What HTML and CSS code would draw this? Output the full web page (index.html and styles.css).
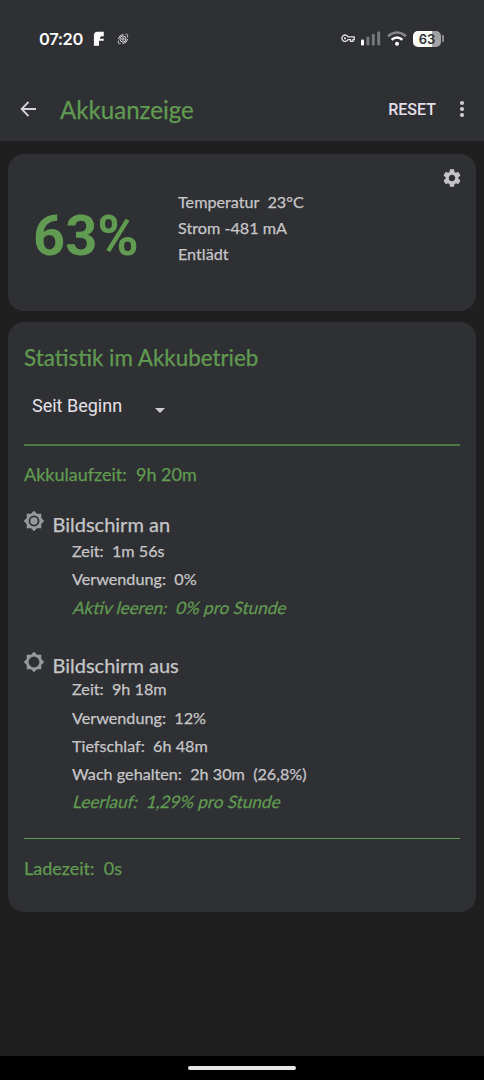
FILE: index.html
```html
<!DOCTYPE html>
<html lang="de">
<head>
<meta charset="utf-8">
<meta name="viewport" content="width=device-width">
<title>Akkuanzeige</title>
<link rel="stylesheet" href="styles.css">
</head>
<body>
<div class="screen">
  <header class="header">
    <div class="status">
      <span class="clock">07:20</span>
      <svg class="ic-f" width="12" height="16" viewBox="0 0 12 16"><path fill="#fff" d="M4.5.8h6.3v4.4H8.4L7 6.6v1.2h3.7v2H6v5H.9V4.4Q.9.8 4.5.8Z"/></svg>
      <svg class="ic-orbit" width="12" height="12" viewBox="0 0 12 12" fill="none" stroke="#ddd"><circle cx="6" cy="6" r="3.1" stroke-width="1"/><circle cx="6" cy="6" r="1.2" stroke-width="1"/><path stroke-width=".9" d="M1.4 7.6V9.6Q1.4 10.7 2.5 10.7H3.6M10.6 4.4V2.4Q10.6 1.3 9.5 1.3H8.4M1.2 6Q1.8 2.4 6.4 1.2M10.8 6Q10.2 9.6 5.6 10.8"/></svg>
      <span class="grow"></span>
      <svg class="ic-key" width="14" height="9" viewBox="0 0 14 9" fill="none" stroke="#e4e4e4" stroke-width="1.3"><path d="M7 2.8H13.2V5.6H12V7.4H9.5V5.6H7A3.2 3.2 0 1 1 7 2.8Z"/><circle cx="4" cy="4.3" r="1.1" fill="#e4e4e4" stroke="none"/></svg>
      <svg class="ic-signal" width="20" height="15" viewBox="0 0 20 15"><rect x="0" y="8.5" width="3" height="6" rx="1.2" fill="#fff"/><g fill="#77787b"><rect x="5.4" y="5.5" width="3" height="9" rx="1.2"/><rect x="10.8" y="3" width="3" height="11.5" rx="1.2"/><rect x="16.2" y=".6" width="3" height="13.9" rx="1.2"/></g></svg>
      <svg class="ic-wifi" width="20" height="15" viewBox="0 0 20 15" fill="none" stroke-width="2.5"><path stroke="#858689" d="M1 5.2Q10-2.2 19 5.2"/><path stroke="#fff" d="M4.6 8.8Q10 4.3 15.4 8.8"/><circle cx="10" cy="12.7" r="2" fill="#fff"/></svg>
      <span class="battery">63</span><span class="battery-tip"></span>
    </div>
    <div class="toolbar">
      <svg class="back" width="18" height="18" viewBox="0 0 18 18" fill="none" stroke="#d6d0dc" stroke-width="1.8"><path d="M16 9H2.2M8.5 2 1.6 9 8.5 16"/></svg>
      <h1 class="title">Akkuanzeige</h1>
      <span class="grow"></span>
      <span class="reset">RESET</span>
      <svg class="more" width="6" height="18" viewBox="0 0 6 18" fill="#d0cbd6"><circle cx="3" cy="3" r="2.1"/><circle cx="3" cy="9" r="2.1"/><circle cx="3" cy="15" r="2.1"/></svg>
    </div>
  </header>

  <section class="card summary">
    <div class="percent">63%</div>
    <div class="facts">
      <p>Temperatur&nbsp; 23°C</p>
      <p>Strom -481 mA</p>
      <p>Entlädt</p>
    </div>
    <svg class="gear" width="18" height="18" viewBox="2 2 20 20" fill="#c4c4c6"><path d="M19.14 12.94c.04-.3.06-.61.06-.94 0-.32-.02-.64-.07-.94l2.03-1.58a.49.49 0 0 0 .12-.61l-1.92-3.32a.49.49 0 0 0-.59-.22l-2.39.96c-.5-.38-1.03-.7-1.62-.94l-.36-2.54a.48.48 0 0 0-.48-.41h-3.84a.48.48 0 0 0-.47.41l-.36 2.54c-.59.24-1.13.57-1.62.94l-2.39-.96a.49.49 0 0 0-.59.22L2.74 8.87a.48.48 0 0 0 .12.61l2.03 1.58c-.05.3-.09.63-.09.94s.02.64.07.94l-2.03 1.58a.49.49 0 0 0-.12.61l1.92 3.32c.12.22.37.29.59.22l2.39-.96c.5.38 1.03.7 1.62.94l.36 2.54c.05.24.24.41.48.41h3.84c.24 0 .44-.17.47-.41l.36-2.54c.59-.24 1.13-.56 1.62-.94l2.39.96c.22.08.47 0 .59-.22l1.92-3.32a.48.48 0 0 0-.12-.61l-2.01-1.58zM12 15.6A3.61 3.61 0 0 1 8.4 12c0-1.98 1.62-3.6 3.6-3.6s3.6 1.62 3.6 3.6-1.62 3.6-3.6 3.6z"/></svg>
  </section>

  <section class="card stats">
    <h2 class="heading">Statistik im Akkubetrieb</h2>
    <div class="select"><span class="choice">Seit Beginn</span><svg class="caret" width="10" height="5" viewBox="0 0 10 5"><path fill="#ccc" d="M0 0h10L5 5z"/></svg></div>
    <div class="rule rule-top"></div>
    <p class="total runtime">Akkulaufzeit:&nbsp; 9h 20m</p>

    <div class="group">
      <svg class="sun" width="20" height="20" viewBox="1 1 22 22" fill="#98999c"><path fill-rule="evenodd" d="M20 8.69V4h-4.69L12 .69 8.69 4H4v4.69L.69 12 4 15.31V20h4.69L12 23.31 15.31 20H20v-4.69L23.31 12 20 8.69zM12 18a6 6 0 1 1 0-12 6 6 0 0 1 0 12z"/><circle cx="12" cy="12" r="4"/></svg>
      <h3 class="name">Bildschirm an</h3>
    </div>
    <div class="lines">
      <p>Zeit:&nbsp; 1m 56s</p>
      <p>Verwendung:&nbsp; 0%</p>
      <p class="rate">Aktiv leeren:&nbsp; 0% pro Stunde</p>
    </div>

    <div class="group group-off">
      <svg class="sun" width="20" height="20" viewBox="1 1 22 22" fill="#98999c"><path fill-rule="evenodd" d="M20 8.69V4h-4.69L12 .69 8.69 4H4v4.69L.69 12 4 15.31V20h4.69L12 23.31 15.31 20H20v-4.69L23.31 12 20 8.69zM12 18a6 6 0 1 1 0-12 6 6 0 0 1 0 12z"/></svg>
      <h3 class="name">Bildschirm aus</h3>
    </div>
    <div class="lines lines-off">
      <p>Zeit:&nbsp; 9h 18m</p>
      <p>Verwendung:&nbsp; 12%</p>
      <p>Tiefschlaf:&nbsp; 6h 48m</p>
      <p>Wach gehalten:&nbsp; 2h 30m&nbsp; (26,8%)</p>
      <p class="rate">Leerlauf:&nbsp; 1,29% pro Stunde</p>
    </div>
    <div class="rule rule-bottom"></div>
    <p class="total charge">Ladezeit:&nbsp; 0s</p>
  </section>

  <footer class="nav"><span class="handle"></span></footer>
</div>
</body>
</html>
```
FILE: styles.css
```css
* { box-sizing: border-box; margin: 0; padding: 0; }
body { background: #1f1f1f; }
p, h1, h2, h3 { font-weight: 400; white-space: nowrap; -webkit-text-stroke: .25px currentColor; }
svg { display: block; flex: none; }
.screen {
  width: 484px; height: 1080px; background: #1f1f1f; color: #c6c6c8;
  font-family: Lato, "Noto Sans", sans-serif;
  display: flex; flex-direction: column; overflow: hidden;
}
.grow { flex: 1; }
.header { height: 141px; flex: none; background: #2f3033; }
.status { height: 77px; padding: 0 40px 0 39px; display: flex; align-items: center; color: #fff; }
.clock { font: 600 16.5px/20px Inter, sans-serif; width: 44px; letter-spacing: -.4px; }
.ic-f { margin-left: 10px; }
.ic-orbit { margin-left: 12px; }
.ic-signal { margin-left: 6px; }
.ic-wifi { margin-left: 6px; }
.battery {
  margin-left: 6px; width: 28px; height: 16px; border-radius: 5px;
  background: linear-gradient(90deg, #fff 68%, #a3a3a5 68%);
  color: #2f3033; font: 600 13px/16px Inter, sans-serif; text-align: center;
}
.battery-tip { width: 2px; height: 7px; margin-left: 1px; background: #8a8b8d; border-radius: 0 1px 1px 0; }
.toolbar { height: 64px; padding: 0 19px 0 20px; display: flex; align-items: center; }
.title { margin: 1px 0 0 22px; font-size: 24.1px; line-height: 32px; color: #609b51; }
.reset { font: 500 16px/20px Roboto, sans-serif; color: #e4dfe9; margin: 2px 23px 0 0; }

.card { margin: 0 8px; border-radius: 16px; background: #2f3033; flex: none; }
.summary { height: 157px; margin-top: 13px; display: flex; }
.percent { width: 170px; padding: 49px 0 0 25px; font: 700 56px/66px Roboto, sans-serif; color: #609b51; }
.facts { flex: 1; padding-top: 34.5px; font-size: 16.2px; line-height: 26.4px; }
.gear { margin: 15px 15px 0 0; }

.stats { height: 590px; margin-top: 11px; padding: 20px 16px 0; }
.heading { font-size: 22.4px; line-height: 32px; color: #609b51; }
.select { margin-top: 20px; padding-left: 8px; height: 24px; display: flex; font: 18px/24px Roboto, sans-serif; color: #e6e1ea; }
.choice { width: 123px; }
.caret { margin-top: 14px; }
.rule { background: #609b51; }
.rule-top { height: 2px; margin-top: 26px; background: #4d7745; }
.total { font-size: 18px; line-height: 28px; color: #609b51; }
.runtime { margin-top: 14px; }
.group { display: flex; height: 24px; margin-top: 24px; }
.sun { margin-top: -1px; }
.name { margin-left: 8.5px; font-size: 20px; line-height: 24px; }
.lines { margin-top: 1px; padding-left: 48px; font-size: 16.2px; line-height: 28.3px; }
.rate { font-size: 17.1px; color: #609b51; transform: skewX(-14deg); transform-origin: 0 20px; }
.group-off { margin-top: 31px; }
.lines-off { margin-top: -1.6px; }
.rule-bottom { height: 1px; margin-top: 21px; }
.charge { margin-top: 15px; }

.nav { margin-top: auto; height: 24px; flex: none; background: #000; display: flex; justify-content: center; align-items: center; }
.handle { width: 108px; height: 4px; border-radius: 2px; background: #e7e7e8; }
```
